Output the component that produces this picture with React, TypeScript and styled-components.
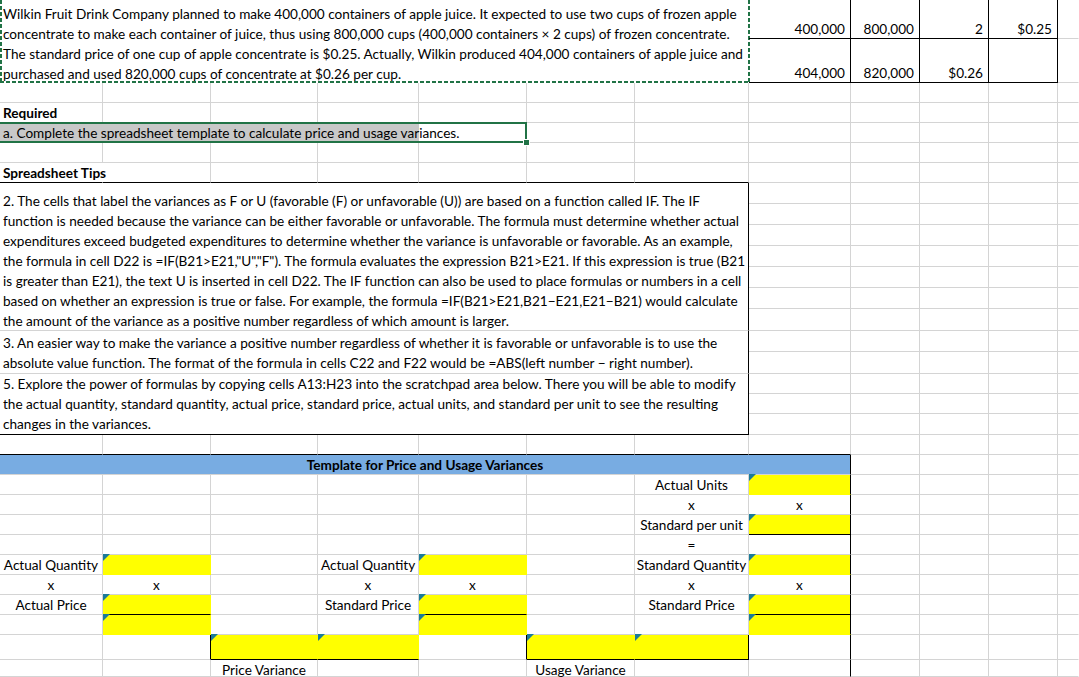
import { FC, ReactNode } from "react";
import styled, { createGlobalStyle, css } from "styled-components";

const FONT = `Lato, "Liberation Sans", Arial, sans-serif`;
const GRID = "#d4d4d4";
const INK = "#000000";
const YELLOW = "#ffff00";
const BANNER = "#78ace2";
const MARKER = "#1c7b98";
const EXCEL_GREEN = "#217346";
const SELECT_GREY = "#c8c8c8";

// column widths A..K, L takes what is left
const COLS = [103, 108, 107, 101, 108, 108, 114, 102, 69, 69, 69];
const ROWS = [
  39, 44, 20, 20, 20, 20, 20, 21, 21, 21, 21, 21, 21, 22, 21, 22, 20, 20, 21, 20, 20, 20, 20, 20, 20, 20, 20, 20, 20, 25,
  17,
];
const LAST_COL = COLS.length;

type Align = "left" | "center" | "right";

type Spec = {
  r: number;
  c: number;
  rs?: number;
  cs?: number;
  kind?: "text" | "input" | "banner" | "note" | "tips" | "selection";
  text?: ReactNode;
  lines?: string[];
  align?: Align;
  bold?: boolean;
  top?: boolean;
  lead?: number;
  br?: string;
  bb?: string;
};

const INTRO = [
  "Wilkin Fruit Drink Company planned to make 400,000 containers of apple juice. It expected to use two cups of frozen apple",
  "concentrate to make each container of juice, thus using 800,000 cups (400,000 containers × 2 cups) of frozen concentrate.",
  "The standard price of one cup of apple concentrate is $0.25. Actually, Wilkin produced 404,000 containers of apple juice and",
  "purchased and used 820,000 cups of concentrate at $0.26 per cup.",
];

const TIP_IF = [
  "2. The cells that label the variances as F or U (favorable (F) or unfavorable (U)) are based on a function called IF. The IF",
  "function is needed because the variance can be either favorable or unfavorable. The formula must determine whether actual",
  "expenditures exceed budgeted expenditures to determine whether the variance is unfavorable or favorable. As an example,",
  'the formula in cell D22 is =IF(B21>E21,"U","F"). The formula evaluates the expression B21>E21. If this expression is true (B21',
  "is greater than E21), the text U is inserted in cell D22. The IF function can also be used to place formulas or numbers in a cell",
  "based on whether an expression is true or false. For example, the formula =IF(B21>E21,B21−E21,E21−B21) would calculate",
  "the amount of the variance as a positive number regardless of which amount is larger.",
];

const TIP_ABS = [
  "3. An easier way to make the variance a positive number regardless of whether it is favorable or unfavorable is to use the",
  "absolute value function. The format of the formula in cells C22 and F22 would be =ABS(left number − right number).",
];

const TIP_EXPLORE = [
  "5. Explore the power of formulas by copying cells A13:H23 into the scratchpad area below. There you will be able to modify",
  "the actual quantity, standard quantity, actual price, standard price, actual units, and standard per unit to see the resulting",
  "changes in the variances.",
];

const GlobalStyle = createGlobalStyle`
  html, body {
    margin: 0;
    padding: 0;
    background: #fff;
  }
  body {
    font-family: ${FONT};
    font-size: 13.6px;
    color: #000;
    overflow: hidden;
  }
`;

const Sheet = styled.div`
  display: grid;
  grid-template-columns: ${COLS.map((w) => `${w}px`).join(" ")} 1fr;
  grid-template-rows: ${ROWS.map((h) => `${h}px`).join(" ")};
  width: 1079px;
  height: 677px;
  overflow: hidden;
  background: #fff;
`;

type Place = {
  $r: number;
  $c: number;
  $rs: number;
  $cs: number;
  $br: string;
  $bb: string;
};

const place = css<Place>`
  position: relative;
  min-width: 0;
  grid-row: ${({ $r, $rs }) => `${$r + 1} / span ${$rs}`};
  grid-column: ${({ $c, $cs }) => `${$c + 1} / span ${$cs}`};
  border-right: 1px solid ${({ $br }) => $br};
  border-bottom: 1px solid ${({ $bb }) => $bb};
`;

const alignMap: Record<Align, string> = {
  left: "flex-start",
  center: "center",
  right: "flex-end",
};

type CellProps = Place & { $align: Align; $bold: boolean; $top: boolean };

// cells are bottom aligned like Excel; the last row is cut by the window, so its text sits at the top
const Cell = styled.div<CellProps>`
  ${place}
  display: flex;
  flex-direction: column;
  justify-content: ${({ $top }) => ($top ? "flex-start" : "flex-end")};
  align-items: ${({ $align }) => alignMap[$align]};
  padding: ${({ $align, $top }) => `${$top ? 3 : 0}px ${$align === "right" ? 5 : 3}px 0 3px`};
  font-weight: ${({ $bold }) => ($bold ? 700 : 400)};
  line-height: ${({ $top }) => ($top ? 14 : 18)}px;
  white-space: nowrap;
`;

const InputCell = styled(Cell)`
  background: ${YELLOW};

  &::before {
    content: "";
    position: absolute;
    top: -1px;
    left: 0;
    border-top: 7px solid ${MARKER};
    border-right: 7px solid transparent;
  }
`;

const Banner = styled(Cell)`
  background: ${BANNER};
`;

const Selection = styled(Cell)`
  background: linear-gradient(90deg, ${SELECT_GREY} 0 419px, transparent 419px);

  &::after {
    content: "";
    position: absolute;
    top: -1px;
    bottom: -1px;
    left: 0;
    right: -1px;
    border: 2px solid ${EXCEL_GREEN};
    border-left: none;
    pointer-events: none;
  }
`;

const FillHandle = styled.span`
  position: absolute;
  right: -4px;
  bottom: -4px;
  width: 5px;
  height: 5px;
  background: ${EXCEL_GREEN};
  border: 1px solid #fff;
  z-index: 2;
`;

const dash = (dir: string) =>
  `repeating-linear-gradient(${dir}, ${EXCEL_GREEN} 0 4px, transparent 4px 6px)`;

const Note = styled.div<Place>`
  ${place}
  border-right: none;
  border-bottom: none;
  background: #fff;
  padding: 4px 3px 0;
  line-height: 20px;
  white-space: nowrap;

  &::after {
    content: "";
    position: absolute;
    inset: 0 -1px 0 0;
    background: ${dash("90deg")} left bottom / 100% 2px no-repeat, ${dash("180deg")} left top / 2px 100% no-repeat,
      ${dash("180deg")} right top / 2px 100% no-repeat;
    pointer-events: none;
  }
`;

const TipBlock = styled.div<Place & { $lead: number }>`
  ${place}
  display: flex;
  flex-direction: column;
  background: #fff;
  padding: ${({ $lead }) => $lead}px 3px 0;
  line-height: 20px;
  white-space: nowrap;
`;

const Line = styled.span`
  display: block;
`;

// where the sheet has black cell borders
const rightInk = (r: number, c: number) =>
  (c === 7 && r >= 20) || (r === 29 && (c === 1 || c === 4 || c === 6)) || (r <= 1 && c >= 7 && c <= 10);

const bottomInk = (r: number, c: number) =>
  (r === 6 && c <= 6) ||
  (r === 19 && c <= 7) ||
  (r <= 1 && c >= 7 && c <= 10) ||
  (r === 23 && c === 7) ||
  (r === 27 && [1, 4, 7].includes(c)) ||
  (r === 29 && [2, 3, 5, 6].includes(c));

const inputs: [number, number][] = [
  [21, 7],
  [23, 7],
  [25, 1],
  [25, 4],
  [25, 7],
  [27, 1],
  [27, 4],
  [27, 7],
  [28, 1],
  [28, 4],
  [28, 7],
  [29, 2],
  [29, 3],
  [29, 5],
  [29, 6],
];

const label = (r: number, c: number, text: string): Spec => ({ r, c, text, align: "center" });

const specs: Spec[] = [
  { r: 0, c: 0, rs: 2, cs: 7, kind: "note", lines: INTRO },
  { r: 0, c: 7, text: "400,000", align: "right" },
  { r: 0, c: 8, text: "800,000", align: "right" },
  { r: 0, c: 9, text: "2", align: "right" },
  { r: 0, c: 10, text: "$0.25", align: "right" },
  { r: 1, c: 7, text: "404,000", align: "right" },
  { r: 1, c: 8, text: "820,000", align: "right" },
  { r: 1, c: 9, text: "$0.26", align: "right" },
  { r: 3, c: 0, text: "Required", bold: true },
  {
    r: 4,
    c: 0,
    cs: 5,
    kind: "selection",
    text: "a. Complete the spreadsheet template to calculate price and usage variances.",
  },
  { r: 6, c: 0, text: "Spreadsheet Tips", bold: true, br: "transparent" },
  { r: 7, c: 0, rs: 7, cs: 7, kind: "tips", lines: TIP_IF, lead: 8, br: INK },
  { r: 14, c: 0, rs: 2, cs: 7, kind: "tips", lines: TIP_ABS, lead: 2, br: INK },
  { r: 16, c: 0, rs: 3, cs: 7, kind: "tips", lines: TIP_EXPLORE, lead: 0, br: INK, bb: INK },
  { r: 20, c: 0, cs: 8, kind: "banner", text: "Template for Price and Usage Variances", bold: true, align: "center" },
  label(21, 6, "Actual Units"),
  label(22, 6, "x"),
  label(22, 7, "x"),
  label(23, 6, "Standard per unit"),
  label(24, 6, "="),
  label(25, 0, "Actual Quantity"),
  label(25, 3, "Actual Quantity"),
  label(25, 6, "Standard Quantity"),
  ...[0, 1, 3, 4, 6, 7].map((c) => label(26, c, "x")),
  label(27, 0, "Actual Price"),
  label(27, 3, "Standard Price"),
  label(27, 6, "Standard Price"),
  { ...label(30, 2, "Price Variance"), top: true },
  { ...label(30, 5, "Usage Variance"), top: true },
  ...inputs.map(([r, c]): Spec => ({ r, c, kind: "input" })),
];

const buildCells = (): Spec[] => {
  const taken = new Set<string>();
  specs.forEach(({ r, c, rs = 1, cs = 1 }) => {
    for (let i = r; i < r + rs; i++) for (let j = c; j < c + cs; j++) taken.add(`${i}:${j}`);
  });
  const blanks: Spec[] = [];
  ROWS.forEach((_, r) => {
    for (let c = 0; c <= LAST_COL; c++) if (!taken.has(`${r}:${c}`)) blanks.push({ r, c });
  });
  return [...blanks, ...specs];
};

const SheetCell: FC<{ spec: Spec }> = ({ spec }) => {
  const { r, c, rs = 1, cs = 1, kind = "text", text, lines, lead = 0, align = "left", bold = false, top = false } = spec;
  const lastR = r + rs - 1;
  const lastC = c + cs - 1;
  const fallback = kind === "input" ? YELLOW : GRID;
  const br = spec.br ?? (rightInk(r, lastC) ? INK : lastC === LAST_COL ? "transparent" : fallback);
  const bb = spec.bb ?? (bottomInk(lastR, c) ? INK : fallback);
  const place = { $r: r, $c: c, $rs: rs, $cs: cs, $br: br, $bb: bb };
  const cellProps = { ...place, $align: align, $bold: bold, $top: top };

  switch (kind) {
    case "note":
      return (
        <Note {...place}>
          {lines?.map((l) => (
            <Line key={l}>{l}</Line>
          ))}
        </Note>
      );
    case "tips":
      return (
        <TipBlock {...place} $lead={lead}>
          {lines?.map((l) => (
            <Line key={l}>{l}</Line>
          ))}
        </TipBlock>
      );
    case "input":
      return <InputCell {...cellProps} />;
    case "banner":
      return <Banner {...cellProps}>{text}</Banner>;
    case "selection":
      return (
        <Selection {...cellProps}>
          {text}
          <FillHandle />
        </Selection>
      );
    default:
      return <Cell {...cellProps}>{text}</Cell>;
  }
};

const App: FC = () => {
  const cells = buildCells();
  return (
    <>
      <GlobalStyle />
      <Sheet>
        {cells.map((spec) => (
          <SheetCell key={`${spec.r}-${spec.c}`} spec={spec} />
        ))}
      </Sheet>
    </>
  );
};

export default App;
